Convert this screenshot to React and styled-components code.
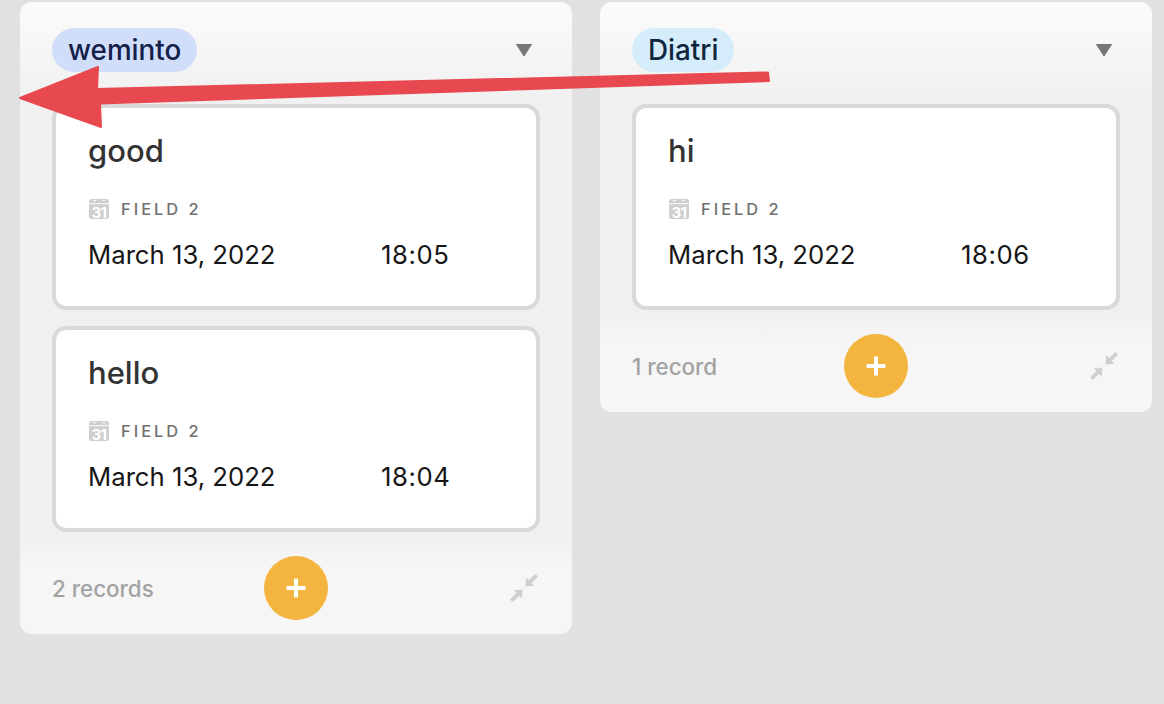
import React from "react";
import styled, { createGlobalStyle } from "styled-components";

const Global = createGlobalStyle`
  html, body { margin: 0; padding: 0; background: #e1e1e1; }
  body { font-family: Inter, "Liberation Sans", sans-serif; overflow: hidden; }
`;
const Board = styled.div`
  position: relative; width: 1164px; height: 704px; padding: 2px 0 0 20px;
  box-sizing: border-box; display: flex; align-items: flex-start; gap: 28px; background: #e1e1e1;
`;
const Column = styled.section`
  width: 552px; border-radius: 12px; overflow: hidden; background: #f0f0f0;
`;
const Header = styled.header`
  height: 102px; box-sizing: border-box; padding: 26px 32px 0; display: flex; justify-content: space-between;
  align-items: flex-start; background: linear-gradient(#fbfbfb, #f0f0f0);
`;
const Pill = styled.span`
  height: 44px; line-height: 44px; border-radius: 22px; padding: 0 16px; font-size: 27.8px; font-weight: 500;
  color: ${p => p.$ink}; background: ${p => p.$bg};
`;
const Caret = styled.svg`
  width: 18px; height: 14px; margin: 15px 7px 0 0; color: #777;
`;
const Cards = styled.div`
  display: flex; flex-direction: column; gap: 16px; padding: 0 32px;
`;
const Card = styled.article`
  height: 206px; box-sizing: border-box; background: #fff; border: 4px solid #d9d9d9; border-radius: 14px;
  padding: 24px 32px 0;
`;
const Title = styled.h3`
  margin: 0; font-size: 31px; line-height: 38px; font-weight: 500; color: #333;
`;
const FieldLabel = styled.div`
  display: flex; align-items: center; gap: 11px; margin-top: 27px; height: 24px; font-size: 16.4px; font-weight: 500;
  letter-spacing: 3px; color: #707070;
`;
const FieldValue = styled.div`
  display: flex; margin-top: 17px; font-size: 25.7px; line-height: 34px; color: #161616;
`;
const DateText = styled.span`width: 293px;`;
const TimeText = styled.span`letter-spacing: 0.6px;`;
const Footer = styled.footer`
  height: 102px; box-sizing: border-box; padding: 0 32px; display: grid; grid-template-columns: 1fr 64px 1fr;
  align-items: center; background: linear-gradient(#f0f0f0, #f6f6f6 35%);
`;
const Count = styled.span`font-size: 22.4px; font-weight: 500; color: #a3a3a3; margin-top: 10px;`;
const AddButton = styled.button`
  width: 64px; height: 64px; margin-top: 10px; border: 0; padding: 0; border-radius: 50%; background: #f3b53f;
  display: flex; align-items: center; justify-content: center;
`;
const Collapse = styled.svg`
  width: 30px; height: 30px; justify-self: end; margin: 10px 1px 0 0; color: #cfcfcf;
`;
const Arrow = styled.svg`
  position: absolute; left: 0; top: 0; width: 800px; height: 140px; pointer-events: none;
`;

const CalendarIcon = () => (
  <svg width="22" height="22" viewBox="0 0 22 22">
    <rect x="1" y="1" width="20" height="20" rx="2.5" fill="#cfcfcf" />
    <rect x="1" y="5" width="20" height="1.2" fill="#f4f4f4" />
    <rect x="5" y="2" width="3" height="1.2" fill="#f4f4f4" />
    <rect x="14" y="2" width="3" height="1.2" fill="#f4f4f4" />
    <text x="11" y="19.5" textAnchor="middle" fontSize="15" fontWeight="700" letterSpacing="-0.5" fontFamily="Inter, sans-serif" fill="#fff">31</text>
  </svg>
);

const Entry = ({ title, time }) => (
  <Card>
    <Title>{title}</Title>
    <FieldLabel><CalendarIcon />FIELD 2</FieldLabel>
    <FieldValue><DateText>March 13, 2022</DateText><TimeText>{time}</TimeText></FieldValue>
  </Card>
);

const Group = ({ name, ink, bg, count, entries }) => (
  <Column>
    <Header>
      <Pill $ink={ink} $bg={bg}>{name}</Pill>
      <Caret viewBox="0 0 18 14"><path d="M1.5 1.5h15L9 13z" fill="currentColor" stroke="currentColor" strokeLinejoin="round" /></Caret>
    </Header>
    <Cards>{entries.map(e => <Entry key={e.title} {...e} />)}</Cards>
    <Footer>
      <Count>{count}</Count>
      <AddButton aria-label="Add">
        <svg width="22" height="22" viewBox="0 0 22 22"><path d="M11 1.5v19M1.5 11h19" stroke="#fff" strokeWidth="4" /></svg>
      </AddButton>
      <Collapse viewBox="0 0 30 30" fill="currentColor">
        <path d="M1 26.5 7.5 20 4.5 17.5 13.5 16.5 12.8 25.5 10 23 3.5 29z" />
        <path d="M29 3.5 22.5 10 25.5 12.5 16.5 13.5 17.2 4.5 20 7 26.5 1z" />
      </Collapse>
    </Footer>
  </Column>
);

export default function App() {
  return (
    <>
      <Global />
      <Board>
        <Group name="weminto" ink="#14204a" bg="#d0def9" count="2 records"
          entries={[{ title: "good", time: "18:05" }, { title: "hello", time: "18:04" }]} />
        <Group name="Diatri" ink="#10263f" bg="#d5edfb" count="1 record"
          entries={[{ title: "hi", time: "18:06" }]} />
        <Arrow viewBox="0 0 800 140">
          <path d="M20 98 98 67 97 89 768 72.5 769 81 100 103.5 101 127z" fill="#e8484f" stroke="#e8484f" strokeWidth="2" strokeLinejoin="round" />
        </Arrow>
      </Board>
    </>
  );
}
